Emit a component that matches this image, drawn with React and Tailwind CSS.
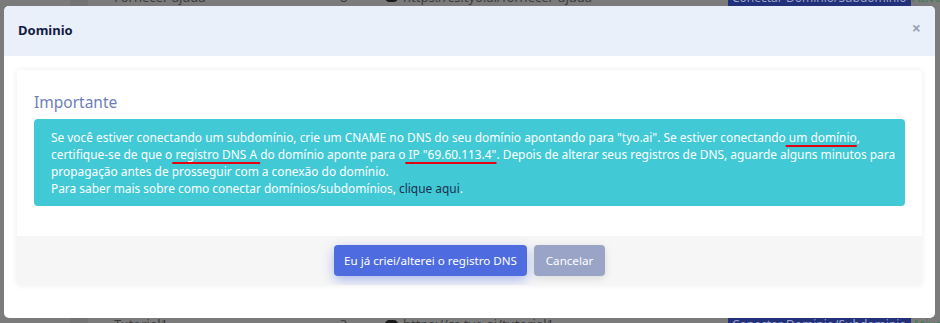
import React from 'react';

const font = { fontFamily: '"Noto Sans", "Open Sans", sans-serif' };

const BackgroundRow = ({ name, count, url }) => (
  <div className="flex items-center h-[22px] text-[13px] text-[#3c3c3c] whitespace-nowrap">
    <div className="w-[114px] shrink-0" />
    <div className="w-[226px] shrink-0">{name}</div>
    <div className="w-[45px] shrink-0">{count}</div>
    <div className="w-[18px] shrink-0">
      <span className="inline-block w-[13px] h-[9px] rounded-full bg-[#1a1a1a]" />
    </div>
    <div className="w-[325px] shrink-0">{url}</div>
    <div className="w-[184px] shrink-0">
      <span className="bg-[#23317a] text-[#9aa3c8] px-[4px] text-[12px]">Conectar Dominio/Subdominio</span>
    </div>
    <div className="text-[#3f7a4f]">Ativo</div>
  </div>
);

const Mark = ({ children }) => (
  <span className="underline decoration-[#e3000f] decoration-2 underline-offset-[3px]">{children}</span>
);

export default function App() {
  return (
    <div className="relative w-[940px] h-[323px] overflow-hidden bg-[#7b7b7b]" style={font}>
      {/* page behind the overlay */}
      <div className="absolute inset-y-0 left-[70px] w-[18px] bg-[#737373]" />
      <div className="relative flex flex-col justify-between h-full">
        <div className="-mt-[13px]">
          <BackgroundRow name="Fornecer ajuda" count="8" url="https://cs.tyo.ai/fornecer-ajuda" />
        </div>
        <div className="-mb-[13px]">
          <BackgroundRow name="Tutorial1" count="3" url="https://cs.tyo.ai/tutorial1" />
        </div>
      </div>

      {/* modal */}
      <div className="absolute left-[4px] top-[6px] w-[931px] h-[312px] bg-white rounded-[5px] flex flex-col">
        <div className="h-[50px] bg-[#e9f0fa] rounded-t-[5px] flex items-center justify-between pl-[14px] pr-[14px]">
          <h5 className="text-[13px] font-bold text-[#151a45]">Dominio</h5>
          <span className="text-[16px] font-bold text-[#9aa3b8] leading-none -mt-[6px]">×</span>
        </div>

        <div className="px-[13px] pt-[14px]">
          <div className="rounded-[4px] shadow-[0_0_6px_rgba(0,0,0,0.08)] overflow-hidden">
            <div className="px-[17px] pt-[22px] pb-[30px]">
              <h4 className="text-[15.5px] text-[#6f7dbd] leading-[20px] mb-[7px]">Importante</h4>
              <div className="bg-[#41c9d6] rounded-[4px] px-[17px] pt-[10px] pb-[9px] text-white text-[11.9px] leading-[17px] whitespace-nowrap">
                Se você estiver conectando um subdomínio, crie um CNAME no DNS do seu domínio apontando para "tyo.ai". Se estiver conectando<Mark> um domínio</Mark>,
                <br />
                certifique-se de que o<Mark> registro DNS A </Mark>do domínio aponte para o<Mark> IP "69.60.113.4"</Mark>. Depois de alterar seus registros de DNS, aguarde alguns minutos para
                <br />
                propagação antes de prosseguir com a conexão do domínio.
                <br />
                Para saber mais sobre como conectar domínios/subdomínios, <span className="text-[#1d3050]">clique aqui</span>.
              </div>
            </div>
            <div className="bg-[#f6f6f6] h-[49px] flex items-center justify-center gap-[7px]">
              <button className="h-[31px] w-[193px] rounded-[4px] bg-[#4e6ce0] text-white text-[11.6px] whitespace-nowrap shadow-[0_4px_12px_rgba(78,108,224,0.45)]">
                Eu já criei/alterei o registro DNS
              </button>
              <button className="h-[31px] w-[71px] rounded-[4px] bg-[#99a4c6] text-white text-[11.6px] whitespace-nowrap shadow-[0_2px_8px_rgba(0,0,0,0.12)]">
                Cancelar
              </button>
            </div>
          </div>
        </div>
      </div>
    </div>
  );
}
